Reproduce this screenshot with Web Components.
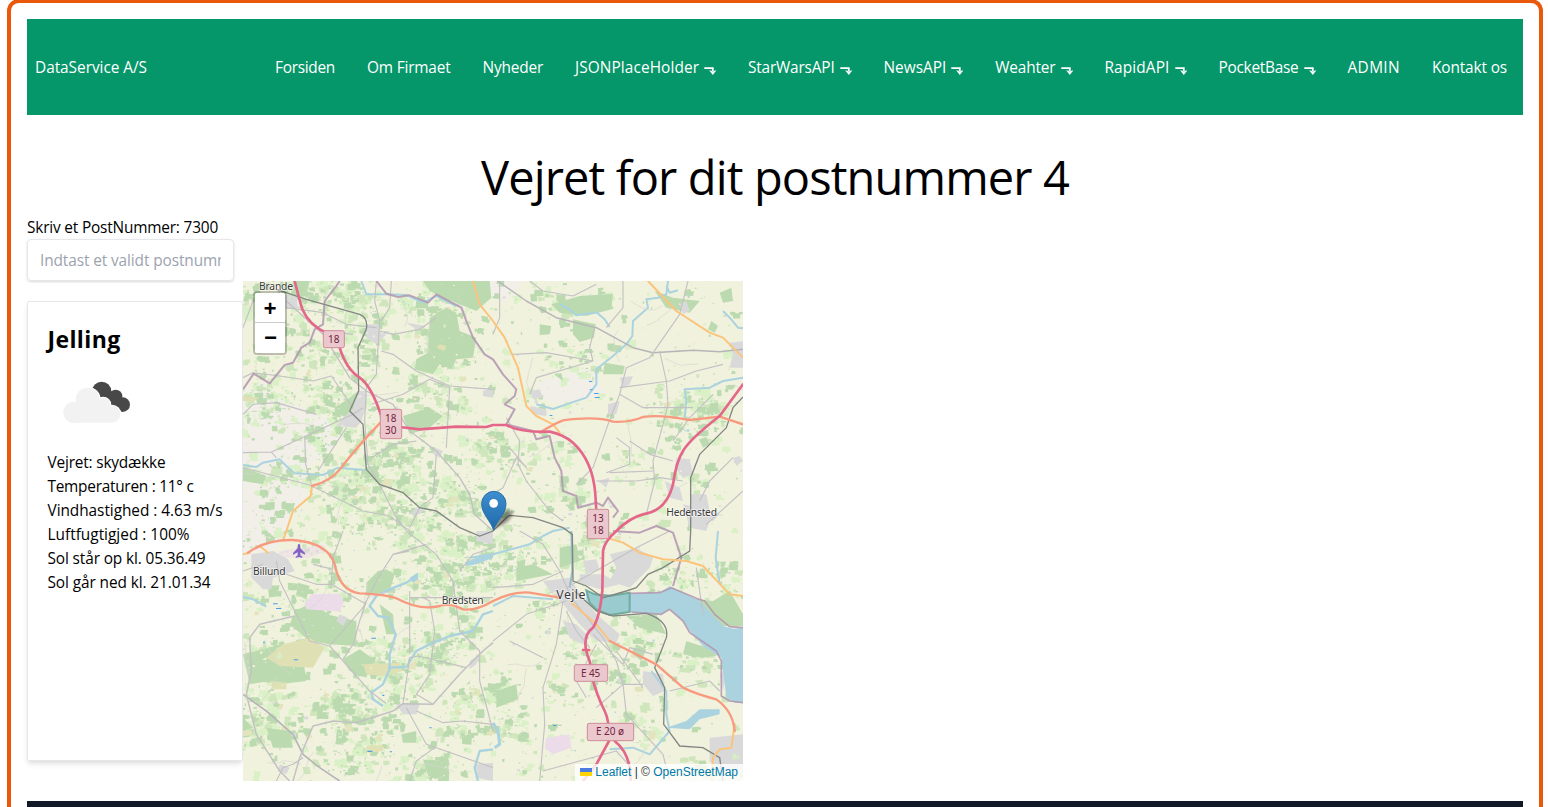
<!DOCTYPE html>
<html lang="da">
<head>
<meta charset="utf-8">
<title>DataService A/S</title>
<style>
html,body{margin:0;background:#fff;overflow:hidden;height:807px}
body{font:15.4px/24px "Open Sans","Noto Sans",sans-serif;color:#000;display:flex;align-items:flex-start}
</style>
</head>
<body>
<app-frame>
  <site-nav></site-nav>
  <page-title><fit-text w="588">Vejret for dit postnummer 4</fit-text></page-title>
  <zip-field></zip-field>
  <weather-row></weather-row>
  <site-footer></site-footer>
</app-frame>
<script>
const define=(name,html,after)=>customElements.define(name,class extends HTMLElement{
  connectedCallback(){
    if(this.shadowRoot)return;
    this.attachShadow({mode:'open'}).innerHTML=html;
    if(after)after(this,this.shadowRoot);
  }
});

/* Text set to a fixed measure by tracking */
define('fit-text','<style>:host{display:inline-block;white-space:nowrap}span{display:inline-block;white-space:pre}</style><span><slot></slot></span>',(el,root)=>{
  const w=+el.getAttribute('w'),s=root.querySelector('span');
  const fit=()=>{
    const n=el.textContent.length;
    s.style.letterSpacing='0';
    s.style.letterSpacing=((w-s.getBoundingClientRect().width)/n)+'px';
    el.style.width=w+'px';
  };
  requestAnimationFrame(fit);
  fit();
});

define('app-frame',`<style>
:host{display:flex;flex:none;flex-direction:column;box-sizing:border-box;width:1536px;height:808px;margin:-1px 0 0 7px;border:4px solid #ea580c;border-bottom:0;border-radius:12px 12px 0 0;padding:16px 16px 0}
::slotted(*){flex:none}
</style><slot></slot>`);

define('drop-arrow',`<style>:host{display:inline-block;width:12px;margin-left:5px}svg{display:block;margin-top:4px}</style>
<svg width="12" height="9" viewBox="0 0 12 9"><path d="M.3 2.2H8.8V5" fill="none" stroke="#fff" stroke-width="1.8"/><path d="M5.6 4.6 8.8 5.4 12 4.6 8.8 8.7Z" fill="#fff" stroke="#fff" stroke-width=".4"/></svg>`);

define('nav-link',`<style>:host{display:flex;align-items:center;padding:0 16px;height:24px}</style><slot></slot>`);

define('site-nav',`<style>
:host{display:flex;align-items:center;justify-content:space-between;box-sizing:border-box;height:96px;background:#059669;color:#fff;padding:2px 0 0 8px}
nav{display:flex}
</style><fit-text w="112">DataService A/S</fit-text><nav></nav>`,(el,root)=>{
  const items=[['Forsiden',60],['Om Firmaet',83.5],['Nyheder',60.5],['JSONPlaceHolder',124,1],['StarWarsAPI',86.5,1],['NewsAPI',62.7,1],['Weahter',60.3,1],['RapidAPI',65,1],['PocketBase',80,1],['ADMIN',52.5],['Kontakt os',75]];
  root.querySelector('nav').innerHTML=items.map(([t,w,a])=>`<nav-link><fit-text w="${w}">${t}</fit-text>${a?'<drop-arrow></drop-arrow>':''}</nav-link>`).join('');
});

define('page-title',`<style>:host{display:flex;justify-content:center;font-size:47px;line-height:48px;height:48px;margin:38px 0 15px}</style><slot></slot>`);

define('zip-field',`<style>
:host{display:flex;flex-direction:column;height:65px;align-items:flex-start}
label{height:23px;line-height:24px}
.in{box-sizing:border-box;width:207px;height:42px;border:1px solid #e5e7eb;border-radius:4px;padding:9px 12px;box-shadow:0 1px 3px rgba(0,0,0,.1),0 1px 2px rgba(0,0,0,.06);color:#9ca3af}
.clip{overflow:hidden;width:181px}
</style><label><fit-text w="191">Skriv et PostNummer: 7300</fit-text></label><div class="in"><div class="clip"><fit-text w="206">Indtast et validt postnummer</fit-text></div></div>`);

define('weather-row',`<style>:host{display:flex;height:500px}</style><weather-card></weather-card><area-map></area-map>`);

define('weather-card',`<style>
:host{display:block;box-sizing:border-box;width:216px;height:460px;margin-top:20px;padding:20px 0 0 19.5px;border:1px solid #e5e7eb;border-radius:2px;box-shadow:0 4px 6px -1px rgba(0,0,0,.1),0 2px 4px -1px rgba(0,0,0,.06)}
h2{margin:0;font-size:23px;line-height:35px;height:36px;font-weight:700}
svg{display:block}
p{margin:0;height:24px}
</style>
<h2><fit-text w="73">Jelling</fit-text></h2>
<svg width="100" height="93" viewBox="144 444 300 279">
<g fill="#484848"><circle cx="305" cy="544" r="29"/><circle cx="347" cy="559" r="20"/><circle cx="368" cy="584" r="22"/><path d="M290 560 330 540 375 600 340 600Z"/></g>
<g fill="#fff"><circle cx="263" cy="569" r="39"/><circle cx="309" cy="585" r="25"/><circle cx="336" cy="612" r="28"/></g>
<g fill="#f2f2f2"><circle cx="222" cy="607" r="32"/><circle cx="263" cy="569" r="36"/><circle cx="309" cy="587" r="23"/><circle cx="336" cy="613" r="25"/><path d="M222 580H320L345 610 336 638H222Z"/></g>
</svg>
<p><fit-text w="118">Vejret: skydække</fit-text></p>
<p><fit-text w="146">Temperaturen : 11° c</fit-text></p>
<p><fit-text w="175">Vindhastighed : 4.63 m/s</fit-text></p>
<p><fit-text w="142">Luftfugtigjed : 100%</fit-text></p>
<p><fit-text w="158">Sol står op kl. 05.36.49</fit-text></p>
<p><fit-text w="163">Sol går ned kl. 21.01.34</fit-text></p>`);

define('area-map',`<style>
:host{display:block;position:relative;width:500px;height:500px;overflow:hidden;background:#f1f2dd}
svg.m{display:block}
.zoom{position:absolute;left:10px;top:10px;border:2px solid rgba(0,0,0,.22);border-radius:4px;background-clip:padding-box}
.zoom b{display:block;box-sizing:border-box;width:30px;height:30px;background:#fff;font:700 22px/34px "Liberation Mono",monospace;text-align:center;color:#000}
.zoom b:first-child{height:30px;line-height:35px;border-bottom:1px solid #ccc;border-radius:2px 2px 0 0}
.zoom b:last-child{border-radius:0 0 2px 2px;padding-left:1px}
.attr{position:absolute;right:0;bottom:0;height:17px;box-sizing:border-box;padding:0 5px;background:rgba(255,255,255,.8);font:12px/16.8px "Liberation Sans",Arial,sans-serif;color:#333;white-space:nowrap}
.attr span{color:#0078a8}
.attr svg{width:12px;height:8px;margin-right:3px}
</style>
<svg class="m" width="500" height="500" viewBox="0 0 1500 1500">
<defs>
<linearGradient id="pin" x2="0" y2="1"><stop stop-color="#3d8fd0"/><stop offset="1" stop-color="#2068a8"/></linearGradient>
<filter id="sh" x="-50%" y="-50%" width="200%" height="200%"><feGaussianBlur stdDeviation="5"/></filter>
</defs>
<rect width="1500" height="1500" fill="#f1f2dd"/>
<g fill="#f2efe9"><path d="M0 330 60 300 120 360 240 400 300 470 190 560 210 610 150 700 130 750 60 860 0 840Z"/><path d="M890 300 1050 260 1090 340 960 370 880 350Z"/><path d="M700 0H840L790 60 720 50Z"/></g>
<g id="patches"></g>
<g fill="#bcdab0" id="woods">
<path d="M560 110 610 80 640 95 650 150 700 170 690 230 640 235 625 265 590 250 570 280 515 265 520 235 555 215Z"/>
<path d="M540 0 740 0 745 50 700 90 650 70 600 50 560 30Z"/>
<path d="M275 380 320 350 345 330 350 400 310 410 280 395Z"/><path d="M0 560 70 585 60 610 0 600Z"/>
<path d="M480 405 560 380 600 405 560 440 500 460Z"/><path d="M140 70 150 0 200 0 190 40Z"/>
<path d="M925 70 1010 45 1110 38 1105 85 1030 105 950 95Z"/><path d="M990 115 1058 130 1053 170 1010 183 990 160Z"/><path d="M890 130 925 135 920 160 890 162Z"/><path d="M1085 245 1145 255 1140 280 1080 280Z"/><path d="M1235 30 1290 50 1370 60 1340 95 1270 80Z"/><path d="M1430 35 1465 20 1470 60 1440 65Z"/><path d="M1405 120 1425 135 1415 155 1395 145Z"/><path d="M1368 475 1390 468 1400 490 1380 500Z"/><path d="M940 285 955 275 960 300Z"/>
<path d="M405 870 430 865 455 880 440 930 370 945 370 905Z"/><path d="M165 905 200 915 190 955 160 940Z"/>
<path d="M155 990 220 960 250 1000 340 1020 340 1095 260 1090 200 1080 140 1030Z"/><path d="M0 1120 80 1100 100 1150 80 1200 20 1210Z"/><path d="M60 1150 180 1130 190 1200 110 1210 40 1200Z"/>
<path d="M300 1135 350 1105 385 1130 370 1190 320 1170Z"/><path d="M410 970 450 1000 455 1060 430 1060Z"/><path d="M0 1310 30 1340 0 1350Z"/><path d="M70 1340 140 1350 150 1400 90 1400Z"/><path d="M540 1435 610 1440 620 1480 560 1500Z"/><path d="M280 1265 340 1270 335 1300 290 1310Z"/><path d="M475 1360 520 1350 520 1385 480 1385Z"/>
<path d="M760 1230 820 1210 825 1255 760 1280Z"/><path d="M1150 1005 1240 1000 1270 1060 1190 1040Z"/><path d="M1320 950 1410 960 1460 930 1500 1000 1500 1035 1440 1035Z"/><path d="M1330 1080 1420 1110 1440 1120 1380 1130 1320 1120Z"/><path d="M1180 1090 1210 1105 1195 1140 1165 1115Z"/><path d="M950 800 1000 790 1010 840 950 860Z"/><path d="M820 860 870 850 930 880 820 900Z"/>
</g>
<g fill="#dfe0b4"><path d="M120 1090 200 1070 245 1100 210 1160 110 1155 70 1130Z"/><path d="M360 1150 470 1145 480 1170 420 1185 370 1180Z"/><path d="M80 1200 130 1205 130 1225 90 1225Z"/><path d="M590 190 610 195 605 210 580 200Z"/><path d="M0 345 50 350 30 362 0 360Z"/><path d="M370 1395 420 1390 420 1410 375 1415Z"/></g>
<g fill="#ecdcea"><path d="M205 940 290 938 302 965 290 992 190 985 185 965Z"/><path d="M910 1370 980 1360 985 1400 930 1420 905 1400Z"/><path d="M110 810 240 790 250 810 200 830 100 830Z" opacity=".6"/></g>
<g fill="#d9d9da">
<path d="M100 40 160 45 165 80 130 85Z"/><path d="M370 130 410 130 410 150 440 150 400 190 370 170Z"/><path d="M345 330 370 330 370 375 355 420 340 440 280 435 300 410 330 385Z"/><path d="M720 330 750 320 750 350 720 345Z"/><path d="M575 500 600 510 590 530 570 520Z"/><path d="M520 680 545 685 530 700 500 700Z"/><path d="M490 125 550 135 520 145Z"/>
<path d="M1310 70 1330 60 1340 90 1320 100Z"/><path d="M1460 185 1500 180 1500 260 1460 260 1470 220Z"/><path d="M1130 290 1170 285 1160 310 1140 320Z"/><path d="M1095 370 1130 360 1120 400 1095 400Z"/><path d="M860 375 910 385 910 405 870 400Z"/><path d="M860 330 890 325 900 350 870 355Z"/><path d="M1065 600 1100 590 1090 620Z"/><path d="M1300 530 1340 535 1350 580 1320 590 1295 560Z"/><path d="M1340 640 1390 640 1400 690 1430 700 1410 720 1350 710Z"/><path d="M1265 600 1310 620 1320 660 1280 650Z"/><path d="M1470 530 1490 525 1500 540 1480 555Z"/><path d="M1370 680 1320 670 1340 740 1390 750 1400 720Z"/>
<path d="M25 820 90 810 135 835 155 870 90 890 85 925 60 925 25 890Z"/><path d="M700 750 750 750 750 790 700 780Z"/><path d="M460 1270 530 1270 520 1300 480 1300Z"/><path d="M290 1000 315 1010 300 1035 280 1020Z"/><path d="M680 1140 710 1120 700 1150 680 1165Z"/><path d="M110 1450 140 1460 130 1480 105 1470Z"/><path d="M700 1450 750 1445 750 1500 700 1490Z"/>
<path d="M1020 840 1060 835 1070 865 1030 880Z"/><path d="M1100 820 1180 800 1230 830 1220 860 1160 920 1100 900 1120 860Z"/><path d="M900 900 980 890 1020 950 1060 1000 1130 1060 1120 1085 1060 1080 1010 1030 960 970 920 930Z"/><path d="M960 1020 1000 1030 1040 1070 1020 1090 980 1070Z"/><path d="M1010 880 1080 880 1130 910 1070 925 1010 905Z"/><path d="M1200 1170 1260 1180 1265 1230 1230 1245 1200 1210Z"/><path d="M1400 1370 1500 1360 1500 1480 1440 1480 1400 1440Z"/><path d="M1430 1180 1450 1160 1440 1230Z"/><path d="M1120 1190 1140 1195 1130 1210Z"/>
</g>
<g id="specks"></g>
<g fill="none" stroke="#aad3df" stroke-width="6" stroke-linejoin="round">
<path d="M0 552 40 558 60 545 110 535 130 555 155 577 240 582 285 560 365 567"/><path d="M355 0 370 40 440 40 490 42 540 65 580 45 640 75"/>
<path d="M950 70 980 85 1000 103 1060 94 1085 115 1100 138"/><path d="M1305 28 1280 35 1270 15"/><path d="M1275 0 1270 40 1245 50 1210 55 1215 80 1170 120 1168 165 1150 190 1110 225 1060 265 1060 310 1030 350 985 365 930 384 880 370"/><path d="M1500 290 1440 300 1400 320 1325 325 1330 360 1325 410"/><path d="M1440 90 1460 110 1485 140 1500 142"/>
<path d="M0 948 30 955 70 977"/><path d="M520 885 490 905 440 925 400 945 380 975 405 1005 435 1010 458 1060 440 1120 440 1165 420 1210 385 1235 390 1255 420 1275" stroke-width="7"/><path d="M435 1160 490 1158 520 1110 560 1090 620 1065 690 1050 720 1000 750 990" stroke-width="7"/><path d="M750 1405 710 1410 695 1460 705 1500" stroke-width="7"/><path d="M680 830 750 820M750 820 860 790 900 765 930 750 980 740"/>
<path d="M985 750 988 870 980 920" stroke="#97bdcb"/><path d="M750 975 810 945 930 955"/><path d="M1425 750 1418 830 1430 910"/><path d="M1225 1170 1270 1230 1270 1300 1280 1350 1220 1420 1170 1400 1100 1405"/><path d="M750 1325 765 1350 770 1390 755 1400" stroke-width="9"/>
</g>
<g fill="#aad3df"><path d="M500 890 525 875 525 895 510 905Z"/><path d="M665 845 700 830 750 815 750 830 700 850 670 855Z"/><path d="M1270 1340 1330 1320 1370 1285 1430 1285 1430 1300 1370 1315 1340 1345Z"/>
<path d="M1030 930 1060 940 1130 940 1250 935 1280 915 1370 960 1440 1035 1470 1043 1500 1040V1265L1475 1265 1450 1250 1435 1130 1380 1095 1340 1050 1320 1020 1280 985 1255 1000 1160 993 1100 1005 1060 985 1030 965Z"/></g>
<path d="M1030 928 1055 940 1100 945 1160 935 1160 993 1100 1002 1060 985 1040 965Z" fill="#9acbcf" stroke="#72ac9d" stroke-width="6"/>
<g fill="#4da0e5"><path d="M90 967h14v3h-14zM99 981h16v3h-16zM1038 300h10v3h-10zM1053 336h14v3h-14zM1055 348h15v3h-15zM1040 325h9v3h-9zM385 1070h14v3h-14zM373 1409h15v4h-15zM418 1241h6v4h-6zM152 1135h13v3h-13zM60 1082h7v3h-7zM559 1339h7v3h-7zM930 1332h10v3h-10zM920 402h8v3h-8zM440 1411h7v3h-7z"/></g>
<g id="minor" fill="none" stroke="#d6d4d1" stroke-width="2"></g>
<g fill="none" stroke="#c3c1c4" stroke-width="3.4" stroke-linejoin="round">
<path d="M400 0 395 60 410 120 400 280 370 320 365 420 375 550 420 630 460 710 490 750"/><path d="M445 0 440 80 415 120M410 150 450 160 530 145 580 110M415 210 450 220 520 270 620 315 750 325"/><path d="M130 60 240 160 320 290 370 330 450 370 500 450 580 510 650 590 680 640 695 700 750 750" stroke-width="4"/><path d="M130 80 240 95 310 130 400 140M0 290 30 275 110 285 210 300 265 285 330 380M0 515 85 513 330 400 360 380M0 560 200 612 360 690 440 705 500 750M85 513 100 530M185 465 188 550 205 610M0 400 30 370 100 365 220 400M0 140 30 60 100 40M385 370 480 340 560 295M560 295 620 320 610 500M580 520 570 650 530 680 500 740M225 570 310 440M385 530 450 490 520 480M245 150 330 160"/>
<path d="M750 -10 850 60 940 110 1060 140 1170 200 1230 215 1350 208 1430 212 1500 205" stroke-width="4.5" stroke="#b7b5b9"/><path d="M1335 0 1310 100 1220 230 1150 260 1130 340 1095 430 1050 560 1000 610"/><path d="M1130 340 1200 380 1350 380M1055 140 1040 200 1050 240 880 290 860 340M1140 0 1140 80 1090 140M770 0 770 110 750 160M860 0 900 30 990 45 1060 10M810 220 910 215 1050 240M1130 320 1280 300 1360 270 1440 250M1250 210 1270 300 1275 370 1260 430 1230 540 1235 600 1210 700M1120 470 1160 500 1160 550 1090 575M1100 575 1230 570M1060 600 1180 600 1250 590 1320 600M1160 480 1220 520 1290 540M1410 340 1340 410 1290 480M1470 530 1400 600 1370 660M800 500 850 560 820 530 780 620 750 640M850 600 920 690 960 720M1500 630 1390 730M790 410 830 480 825 550 850 600"/>
<path d="M100 840 110 900 200 1080 260 1095 380 1230 430 1268M260 1095 360 980 400 900 450 820 550 790M300 750 270 830 265 910M450 820 500 810M490 750 580 820 630 900 650 1050 710 1110 710 1200 750 1350M650 870 690 820 750 800M500 930V1120M540 950 560 960 575 1050 560 1180 520 1240 570 1270M500 950 600 950 750 950"/><path d="M0 1240 70 1290 150 1360 180 1420 230 1460 290 1500" stroke-width="5" stroke="#b7b5b9"/><path d="M155 1005 50 1030 20 1070 25 1170 10 1240 40 1360 110 1470 140 1500M150 1500 170 1430 210 1335 270 1320 340 1325 450 1290 480 1268 570 1270 650 1180 720 1110 750 1085" stroke-width="4.5"/><path d="M480 1268 500 1130 525 1125 670 1160M520 1290 600 1325 660 1320 750 1330M490 1280 550 1390 750 1460M100 1500 120 1460 150 1450 180 1430M210 850 270 865M60 850 0 870M130 880 220 910 265 910 370 970M500 1500 520 1440 575 1400M300 1135 330 1090 350 1020 370 960"/>
<path d="M830 750 900 790 950 870 985 950 1080 1070 1120 1140 1140 1210 1150 1300 1260 1420 1280 1500M970 920 1180 800 1280 750M960 960 940 1090 900 1220 905 1330 890 1500M960 870 870 910 750 920M970 960 850 1000 750 1080M970 990 1000 1050 1040 1100M1030 1250 1000 1200 1060 1090M1060 1280 1140 1210 1200 1210M1050 1060 1140 1150 1160 1100 1230 1120M1280 1230 1400 1200 1430 1230M1120 1110 1200 1220M800 1080 900 1130M1360 860 1380 1000M1200 1500 1120 1410 900 1470"/>
</g>
<g fill="none" stroke="#b295b0" stroke-width="6" stroke-linejoin="round" opacity=".85"><path d="M0 325 32 278 80 307 125 252 150 245 175 200 200 185 215 145 240 130 245 60 280 15 290 0M400 0 430 38 465 48 500 43 555 65 580 40 655 80 670 120 690 170 725 220 750 235 780 280 820 325 815 345 785 370 815 385 790 430 870 450 880 475 920 465 935 530 955 570 960 630 1000 645 1005 680 1060 665 1080 675 1095 650 1125 690 1110 710M1110 750 1190 755 1240 735 1290 755 1315 830 1290 915"/><path d="M1160 937 1250 935 1285 920 1360 952 1385 960 1415 1000 1460 1037 1500 1040M1500 1265 1460 1260 1435 1245 1435 1140 1420 1110 1340 1055 1320 1020 1280 985 1255 1000 1165 993" stroke-width="5"/></g>
<g fill="none" stroke="#838783" stroke-width="4"><path d="M100 25 190 55 350 100Q376 110 370 145L345 200 347 330 320 390 360 430 370 565 410 610 480 635 530 680 580 690 650 740 710 765 750 750 790 710 800 703 870 710 960 740 988 760 990 900 1030 915 1080 950 1150 930 1180 920 1215 880 1260 860 1340 810 1343 750V590L1370 520 1450 440 1470 380 1500 348"/><path d="M995 930 1060 990 1110 1005 1210 997Q1280 1020 1270 1070L1235 1160 1265 1220 1262 1330 1310 1395 1380 1400 1430 1430 1440 1500"/></g>
<g fill="none" stroke-linecap="round" stroke-linejoin="round">
<g stroke="#fbc47d" stroke-width="6"><path d="M690 0 710 70 750 120 785 170 825 260 850 375 880 405 930 430 950 455M1215 0 1300 90 1400 155 1440 170 1500 230M207 615 203 645 150 690 130 750 120 778M1090 770 1140 785 1190 815 1260 835 1330 840 1380 855 1460 940 1500 945M985 965 1060 1030 1100 1080M1405 1500 1410 1430 1430 1405 1465 1400 1475 1330M0 820 20 815M50 795 75 815"/></g>
<g stroke="#f89a80" stroke-width="7"><path d="M412 425Q340 500 295 560 265 600 207 615M890 455Q930 430 960 418 1060 405 1110 422 1160 425 1200 408 1250 400 1340 417L1430 407 1500 430M15 815Q70 775 150 777 255 785 275 850 290 930 350 937 430 940 460 952 530 990 590 975 620 965 660 985 700 990 750 960 810 930 860 935L950 950M1100 1080 1240 1150 1320 1220Q1360 1240 1420 1255 1470 1290 1475 1350"/></g>
<g stroke="#e4678a" stroke-width="8"><path id="mw" d="M155 0Q170 60 178 85 200 135 250 155 285 180 290 200 310 265 350 290 385 315 413 400M470 438 530 445 640 437 730 438 750 432 790 432Q830 455 920 452 960 460 990 485 1050 540 1057 640L1060 690M1500 310 1430 405Q1340 475 1320 510 1300 540 1290 610 1270 690 1200 700 1160 710 1120 750 1085 780 1080 810L1078 930Q1070 1010 1050 1040 1010 1070 1040 1140L1045 1180Q1060 1240 1085 1290 1100 1320 1098 1380L1060 1450 1020 1500M1115 1380Q1165 1420 1163 1500M1020 1107H1038"/></g>
</g>
<g font-family="Noto Sans,Open Sans,sans-serif">
<g fill="#ebc8ce" stroke="#cf8d99" stroke-width="3"><rect x="241" y="149" width="63" height="51" rx="5"/><rect x="412" y="385" width="64" height="88" rx="5"/><rect x="1033" y="685" width="64" height="88" rx="5"/><rect x="994" y="1151" width="100" height="50" rx="5"/><rect x="1033" y="1327" width="139" height="52" rx="5"/></g>
<g fill="#72243e" font-size="30" text-anchor="middle"><text x="272" y="187">18</text><text x="443" y="423">18</text><text x="443" y="459">30</text><text x="1065" y="723">13</text><text x="1065" y="759">18</text><text x="1043" y="1187" textLength="58">E 45</text><text x="1101" y="1363" textLength="84">E 20 ø</text></g>
<g fill="#3b3b3b" font-size="31" stroke="#fff" stroke-opacity=".6" stroke-width="5" paint-order="stroke"><text x="48" y="26" textLength="102">Brande</text><text x="30" y="881" textLength="98">Billund</text><text x="596" y="968" textLength="126">Bredsten</text><text x="1270" y="704" textLength="152">Hedensted</text><text x="940" y="954" font-size="37" textLength="87">Vejle</text></g>
</g>
<path d="M168 789C164 789 164 795 164 802L150 816V821L164 814V823L158 828V831L168 828 178 831V828L172 823V814L186 821V816L172 802C172 795 172 789 168 789Z" fill="#8461c4"/>
<path d="M752 745 765 715Q785 680 808 690 812 710 785 728Z" fill="#000" opacity=".4" filter="url(#sh)"/>
<path d="M752 748C744 720 716 700 716 668A36.5 37 0 0 1 789 668C789 700 760 720 752 748Z" fill="url(#pin)" stroke="#2b6fa8" stroke-width="3"/><circle cx="752" cy="667" r="13" fill="#fff"/>
</svg>
<div class="zoom"><b>+</b><b>−</b></div>
<div class="attr"><span><svg viewBox="0 0 12 8"><path fill="#4c7be1" d="M0 0h12v4H0z"/><path fill="#ffd500" d="M0 4h12v4H0z"/></svg>Leaflet</span> | © <span>OpenStreetMap</span></div>`,(el,root)=>{
  /* Seeded scatter of small fields, groves and hamlets */
  let s=7321;
  const r=()=>{s|=0;s=s+0x6D2B79F5|0;let t=Math.imul(s^s>>>15,1|s);t=t+Math.imul(t^t>>>7,61|t)^t;return((t^t>>>14)>>>0)/4294967296};
  /* A grove is a few overlapping slanted field-shaped quads */
  const blob=(x,y,a)=>{
    let d='';
    const n=a>6?4:1;
    for(let i=0;i<n;i++){
      const px=x+(r()-.5)*a*2,py=y+(r()-.5)*a*2,w=a*(.4+r()*.9),h=a*(.3+r()*.7),k=(r()-.5)*a*.7,j=(r()-.5)*a*.5;
      d+=`M${(px-w).toFixed(1)} ${(py-h+j).toFixed(1)}L${(px+w+k).toFixed(1)} ${(py-h).toFixed(1)} ${(px+w).toFixed(1)} ${(py+h).toFixed(1)} ${(px-w+k).toFixed(1)} ${(py+h-j).toFixed(1)}Z`;
    }
    return d;
  };
  const hubs=[];for(let i=0;i<140;i++){const x=r()*1500;if(x<800||r()<.55)hubs.push([x,r()*1500]);}
  hubs.push([120,40],[560,60],[600,200],[60,330],[250,340],[250,340],[300,370],[470,500],[180,1000],[100,1150],[330,1150],[420,1130],[560,1100],[560,1120],[620,1100],[250,930],[450,900],[120,1350],[400,1380],[560,1430],[850,820],[1000,800],[1200,1040],[1150,1110],[300,1270],[60,230],[330,50],[520,640],[640,380],[920,70],[1400,880]);
  const layer=(color,count,min,max,clump)=>{
    let d='';
    for(let i=0;i<count;i++){
      let x=r()*1500,y=r()*1500;
      if(r()<clump){const h=hubs[Math.floor(r()*hubs.length)];x=h[0]+(r()+r()-1)*95;y=h[1]+(r()+r()-1)*70;}
      else if(x>800&&r()<.4)continue;
      d+=blob(x,y,min+r()*r()*(max-min));
    }
    return `<path fill="${color}" d="${d}"/>`;
  };
  root.getElementById('patches').innerHTML=layer('#daf0c6',1800,3,14,.75)+layer('#cfe6bd',1100,3,12,.7)+layer('#bcdab0',2400,2,13,.7)+layer('#e3e4bd',60,5,12,.8)+layer('#f8e2cd',300,2,4,0)+layer('#dcdcdc',110,3,7,0)+layer('#b5d9e3',50,2,4,.3);
  root.getElementById('specks').innerHTML=layer('#d6edc3',260,2,8,.8)+layer('#f1f2dd',420,2,6,.5);
  let m='';
  for(let i=0;i<40;i++){
    let x=r()*1500,y=r()*1500,a=r()*6.28;
    if(x>1150&&y>880&&y<1300)continue;
    m+='M'+Math.round(x)+' '+Math.round(y);
    for(let k=0;k<4;k++){a+=(r()-.5)*1.1;x+=Math.cos(a)*26;y+=Math.sin(a)*26;m+='L'+Math.round(x)+' '+Math.round(y);}
  }
  root.getElementById('minor').innerHTML=`<path d="${m}"/>`;
});

define('site-footer',`<style>:host{display:block;height:6px;margin-top:20px;background:#111827}</style>`);
</script>
</body>
</html>
